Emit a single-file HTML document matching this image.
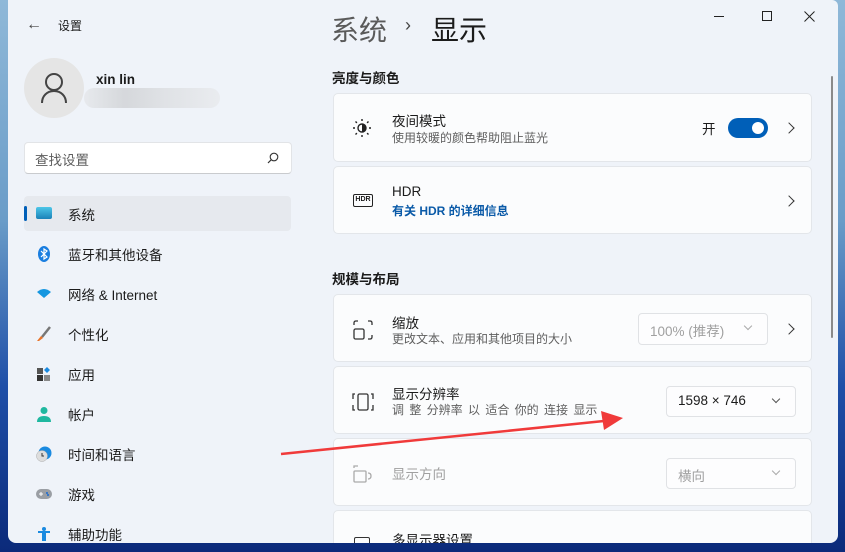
<!DOCTYPE html>
<html><head><meta charset="utf-8"><style>
*{margin:0;padding:0;box-sizing:border-box}
body{width:845px;height:552px;overflow:hidden;position:relative;font-family:"Liberation Sans","Noto Sans CJK SC",sans-serif;color:#1b1b1b;background:linear-gradient(180deg,#8fb8d8 0%,#6a9cc8 40%,#1f4fa8 70%,#0b2a7a 100%)}
.win{position:absolute;left:8px;top:0;width:830px;height:543px;background:#eff3f9;border-radius:0 6px 8px 8px;overflow:hidden}
.abs{position:absolute}
.t{position:absolute;white-space:nowrap}
.nav{position:absolute;left:24px;width:267px;height:35px;font-size:13.5px}
.nav .ic{position:absolute;left:12px;top:10px;width:16px;height:16px}
.nav span{position:absolute;left:44px;top:8px}
.card{position:absolute;left:325px;width:479px;background:#fbfcfd;border:1px solid #e3e6ea;border-radius:5px}
.card .h{position:absolute;left:58px;font-size:13.5px}
.card .s{position:absolute;left:58px;font-size:12px;color:#5f5f5f}
.chev{position:absolute;right:18px;width:8px;height:8px;border-right:1.3px solid #333;border-top:1.3px solid #333;transform:rotate(45deg)}
.dd{position:absolute;border:1px solid #e0e2e5;border-radius:4px;background:#fdfdfe;font-size:13.5px}
.dd .v{position:absolute;left:11px;top:6px}
.dd .a{position:absolute;right:16px;top:9px;width:6px;height:6px;border-right:1px solid #555;border-bottom:1px solid #555;transform:rotate(45deg)}
</style></head><body>
<div class="win">
 <div class="t" style="left:18px;top:16px;font-size:16px;color:#444">←</div>
 <div class="t" style="left:50px;top:17px;font-size:12px">设置</div>
 <div class="abs" style="left:706px;top:16px;width:10px;border-top:1px solid #222"></div>
 <div class="abs" style="left:754px;top:11px;width:10px;height:10px;border:1px solid #222"></div>
 <svg class="abs" style="left:796px;top:11px" width="11" height="11" viewBox="0 0 11 11"><path d="M0.5 0.5L10.5 10.5M10.5 0.5L0.5 10.5" stroke="#222" stroke-width="1"/></svg>
 <div class="abs" style="left:16px;top:58px;width:60px;height:60px;border-radius:50%;background:#e5e5e5"></div>
 <svg class="abs" style="left:32px;top:72px" width="28" height="32" viewBox="0 0 28 32"><circle cx="14" cy="10" r="8" fill="none" stroke="#444" stroke-width="2"/><path d="M2 31c0-7 5-12 12-12s12 5 12 12" fill="none" stroke="#444" stroke-width="2"/></svg>
 <div class="t" style="left:88px;top:72px;font-size:13.5px;font-weight:bold">xin lin</div>
 <div class="abs" style="left:76px;top:88px;width:136px;height:20px;background:linear-gradient(90deg,#e5e7ea,#cfd1d4 30%,#dcdee1 60%,#e8eaed);border-radius:10px;opacity:.8"></div>
 <div class="abs" style="left:16px;top:142px;width:268px;height:32px;background:#fff;border:1px solid #e2e4e7;border-bottom-color:#c9cbce;border-radius:4px"></div>
 <div class="t" style="left:27px;top:149px;font-size:13.5px;color:#5d5d5d">查找设置</div>
 <svg class="abs" style="left:259px;top:152px" width="12" height="12" viewBox="0 0 12 12"><circle cx="7" cy="5" r="3.8" fill="none" stroke="#333" stroke-width="1.1"/><path d="M4.3 7.7L1 11" stroke="#333" stroke-width="1.2"/></svg>
 <div class="nav" style="left:16px;top:196px;background:#e6e9ee;border-radius:4px"><div class="abs" style="left:0;top:10px;width:3px;height:15px;background:#005fb8;border-radius:2px"></div><div class="ic" style="left:12px;top:11px;height:12px;background:linear-gradient(#4cc6e8,#1b82b8);border-radius:2px"></div><span>系统</span></div>
 <div class="nav" style="left:16px;top:236px"><svg class="ic" viewBox="0 0 16 16" style="left:12px"><ellipse cx="8" cy="8" rx="6" ry="8" fill="#1a7ee0"/><path d="M5 5l6 6-3 2V3l3 2-6 6" fill="none" stroke="#fff" stroke-width="1.2"/></svg><span>蓝牙和其他设备</span></div>
 <div class="nav" style="left:16px;top:276px"><svg class="ic" viewBox="0 0 16 16"><path d="M1 6q7-6 14 0l-7 6z" fill="#1596e0"/></svg><span>网络 &amp; Internet</span></div>
 <div class="nav" style="left:16px;top:316px"><svg class="ic" viewBox="0 0 16 16"><path d="M14 1L6 11" stroke="#777" stroke-width="2.5"/><path d="M5 10l2 2-4 3-2 0z" fill="#e8742a"/></svg><span>个性化</span></div>
 <div class="nav" style="left:16px;top:356px"><svg class="ic" viewBox="0 0 16 16"><rect x="1" y="2" width="6" height="6" fill="#555"/><rect x="1" y="9" width="6" height="6" fill="#333"/><rect x="8" y="9" width="6" height="6" fill="#888"/><path d="M11 1l3 3-3 3-3-3z" fill="#1a8ae0"/></svg><span>应用</span></div>
 <div class="nav" style="left:16px;top:396px"><svg class="ic" viewBox="0 0 16 16"><circle cx="8" cy="4.5" r="3.5" fill="#1fb8a0"/><path d="M1 16q0-6 7-6t7 6z" fill="#1fb8a0"/></svg><span>帐户</span></div>
 <div class="nav" style="left:16px;top:436px"><svg class="ic" viewBox="0 0 16 16"><circle cx="9" cy="7" r="6.5" fill="#1a8ae0"/><circle cx="6" cy="10" r="5.5" fill="#ddd" stroke="#aaa" stroke-width=".5"/><path d="M6 7v3h2" stroke="#333" fill="none"/></svg><span>时间和语言</span></div>
 <div class="nav" style="left:16px;top:476px"><svg class="ic" viewBox="0 0 16 16"><rect x="0" y="3" width="16" height="10" rx="5" fill="#9a9ea4"/><path d="M3 8h4M5 6v4" stroke="#fff"/><circle cx="11" cy="7" r="1" fill="#1a6ad0"/><circle cx="12" cy="9" r="1" fill="#1a6ad0"/></svg><span>游戏</span></div>
 <div class="nav" style="left:16px;top:516px"><svg class="ic" viewBox="0 0 16 16"><circle cx="8" cy="3" r="2" fill="#1a8ae0"/><path d="M2 5h12v2H10v8H6V7H2z" fill="#1a8ae0"/></svg><span>辅助功能</span></div>
 <div class="t" style="left:323px;top:9px;font-size:28px;color:#5a5a5a">系统</div>
 <div class="t" style="left:397px;top:15px;font-size:18px;color:#444">›</div>
 <div class="t" style="left:423px;top:9px;font-size:28px;color:#1b1b1b">显示</div>
 <div class="abs" style="left:823px;top:76px;width:2px;height:262px;background:#8a8a8a;border-radius:1px"></div>
 <div class="t" style="left:324px;top:67px;font-size:13.5px;font-weight:bold">亮度与颜色</div>
 <div class="card" style="top:93px;height:69px">
  <svg class="abs" style="left:18px;top:24px" width="20" height="20" viewBox="0 0 20 20"><circle cx="10" cy="10" r="4" fill="none" stroke="#222" stroke-width="1.4"/><path d="M10 6a4 4 0 0 1 0 8z" fill="#222"/><g stroke="#222" stroke-width="1.4"><path d="M10 1v2M10 17v2M1 10h2M17 10h2M3.5 3.5l1.4 1.4M15.1 15.1l1.4 1.4M3.5 16.5l1.4-1.4M15.1 4.9l1.4-1.4"/></g></svg>
  <div class="h" style="top:16px">夜间模式</div><div class="s" style="top:35px">使用较暖的颜色帮助阻止蓝光</div>
  <div class="t" style="left:368px;top:24px;font-size:13.5px">开</div>
  <div class="abs" style="left:394px;top:24px;width:40px;height:20px;border-radius:10px;background:#005fb8"><div class="abs" style="left:24px;top:4px;width:12px;height:12px;border-radius:50%;background:#fff"></div></div>
  <div class="chev" style="top:30px"></div>
 </div>
 <div class="card" style="top:166px;height:68px">
  <div class="abs" style="left:19px;top:27px;width:20px;height:13px;border:1.3px solid #222;border-radius:2px;font-size:7px;font-weight:bold;text-align:center;line-height:10px">HDR</div>
  <div class="h" style="top:17px">HDR</div><div class="s" style="top:35px;color:#0a5aa8;font-weight:bold">有关 HDR 的详细信息</div>
  <div class="chev" style="top:30px"></div>
 </div>
 <div class="t" style="left:324px;top:268px;font-size:13.5px;font-weight:bold">规模与布局</div>
 <div class="card" style="top:294px;height:68px">
  <svg class="abs" style="left:19px;top:25px" width="20" height="20" viewBox="0 0 20 20" fill="none" stroke="#333" stroke-width="1.3"><path d="M1 5V3q0-2 2-2h2M15 1h2q2 0 2 2v2M19 15v2q0 2-2 2h-2"/><rect x="1" y="9" width="10" height="10" rx="1.5"/></svg>
  <div class="h" style="top:17px">缩放</div><div class="s" style="top:35px">更改文本、应用和其他项目的大小</div>
  <div class="dd" style="left:304px;top:18px;width:130px;height:32px;color:#a0a0a0"><span class="v">100% (推荐)</span><span class="a" style="border-color:#aaa"></span></div>
  <div class="chev" style="top:30px"></div>
 </div>
 <div class="card" style="top:366px;height:68px">
  <svg class="abs" style="left:18px;top:25px" width="22" height="20" viewBox="0 0 22 20" fill="none" stroke="#333" stroke-width="1.3"><rect x="6" y="2" width="10" height="16" rx="1.5"/><path d="M3 2H1v5M1 13v5h2M19 2h2v5M21 13v5h-2"/></svg>
  <div class="h" style="top:16px">显示分辨率</div><div class="s" style="top:34px;word-spacing:2px">调 整 分辨率 以 适合 你的 连接 显示</div>
  <div class="dd" style="left:332px;top:19px;width:130px;height:31px"><span class="v">1598 × 746</span><span class="a"></span></div>
 </div>
 <div class="card" style="top:438px;height:68px">
  <svg class="abs" style="left:19px;top:25px" width="20" height="20" viewBox="0 0 20 20" fill="none" stroke="#aaa" stroke-width="1.3"><rect x="1" y="7" width="12" height="11" rx="1"/><path d="M1 4V2h4M15 9q3 0 3 3t-3 3"/></svg>
  <div class="h" style="top:24px;color:#a0a0a0">显示方向</div>
  <div class="dd" style="left:332px;top:19px;width:130px;height:31px;color:#a0a0a0"><span class="v">横向</span><span class="a" style="border-color:#aaa"></span></div>
 </div>
 <div class="card" style="top:510px;height:60px">
  <div class="abs" style="left:20px;top:26px;width:16px;height:14px;border:1.3px solid #333;border-radius:2px"></div>
  <div class="h" style="top:18px">多显示器设置</div>
 </div>
</div>
<svg class="abs" style="left:0;top:0" width="845" height="552"><path d="M281 454L604 421" stroke="#f03a3a" stroke-width="2.5"/><path d="M623 418L601 411L604 430Z" fill="#f03a3a"/></svg>
</body></html>
